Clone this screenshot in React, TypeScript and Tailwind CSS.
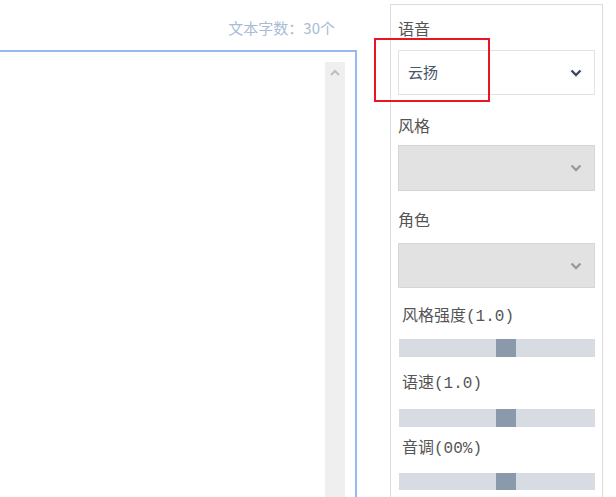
import React from "react";

const cjk = { fontFamily: '"Noto Sans CJK SC", sans-serif' };
const mono = { fontFamily: '"Liberation Mono", "Noto Sans CJK SC", monospace' };

function Chevron({ dark }: { dark?: boolean }) {
  return (
    <svg width="12" height="8" viewBox="0 0 12 8" className="shrink-0">
      <path
        d="M1.5 1.5 L6 6 L10.5 1.5"
        fill="none"
        stroke={dark ? "#3b4a60" : "#9a9a9a"}
        strokeWidth="2.4"
      />
    </svg>
  );
}

function Slider({ className }: { className: string }) {
  return (
    <div className={`relative bg-[#d6dce2] ${className}`}>
      <div className="absolute left-[97px] top-0 h-full w-[20px] bg-[#8a9aaa]" />
    </div>
  );
}

export default function App() {
  return (
    <div className="flex h-[497px] w-[616px] overflow-hidden bg-white" style={cjk}>
      {/* left: text area */}
      <div className="flex w-[357px] shrink-0 flex-col">
        <div className="flex h-[50px] items-start justify-end pr-[22px] pt-[18px] text-[15px] leading-[20px] text-[#a9bcd6]">
          文本字数：30个
        </div>
        <div className="flex flex-1 justify-end border-t-2 border-r-2 border-[#97b8f3] pr-[10px] pt-[10px]">
          <div className="flex w-[20px] justify-center bg-[#efefef] pt-[7px]">
            <svg width="12" height="8" viewBox="0 0 12 8">
              <path d="M2 6 L6 2 L10 6" fill="none" stroke="#bdbdbd" strokeWidth="2" />
            </svg>
          </div>
        </div>
      </div>

      {/* right: settings panel */}
      <div className="ml-[33px] mt-[4px] w-[213px] shrink-0">
        <div className="relative h-full border border-b-0 border-[#dcdcdc] pl-[7px] pr-[7px] pt-[11px] text-[#555]">
          <div className="h-[24px] text-[16px] leading-[24px]">语音</div>
          <div className="mt-[10px] flex h-[45px] items-center justify-between border border-[#e3e3e3] bg-white pl-[9px] pr-[12px] text-[15px] text-[#4a5568]">
            <span>云扬</span>
            <Chevron dark />
          </div>

          <div className="mt-[18px] h-[24px] text-[16px] leading-[24px]">风格</div>
          <div className="mt-[8px] flex h-[46px] items-center justify-end border border-[#d6d6d6] bg-[#e2e2e2] pr-[12px]">
            <Chevron />
          </div>

          <div className="mt-[16px] h-[24px] text-[16px] leading-[24px]">角色</div>
          <div className="mt-[12px] flex h-[45px] items-center justify-end border border-[#d6d6d6] bg-[#e2e2e2] pr-[12px]">
            <Chevron />
          </div>

          <div className="mt-[17px] h-[24px] pl-[4px] text-[16px] leading-[24px]" style={mono}>
            风格强度(1.0)
          </div>
          <Slider className="ml-[1px] mt-[10px] h-[18px]" />

          <div className="mt-[15px] h-[24px] pl-[4px] text-[16px] leading-[24px]" style={mono}>
            语速(1.0)
          </div>
          <Slider className="ml-[1px] mt-[13px] h-[18px]" />

          <div className="mt-[10px] h-[24px] pl-[4px] text-[16px] leading-[24px]" style={mono}>
            音调(00%)
          </div>
          <Slider className="ml-[1px] mt-[12px] h-[17px]" />

          {/* highlight box */}
          <div className="absolute left-[-17px] top-[33px] h-[64px] w-[116px] border-2 border-[#e8161e]" />
        </div>
      </div>
    </div>
  );
}
